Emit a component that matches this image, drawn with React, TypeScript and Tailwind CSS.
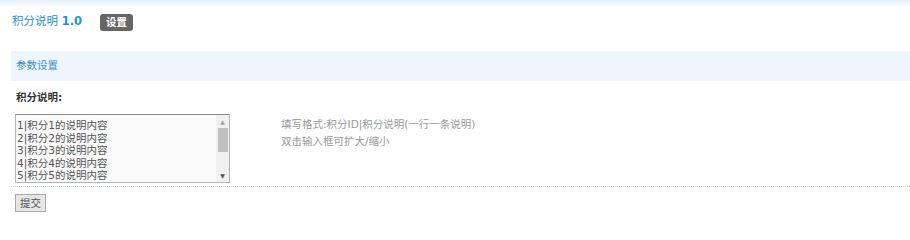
const CN = "font-['DejaVu_Sans','Noto_Sans_CJK_SC',sans-serif]";

const LINES = [1, 2, 3, 4, 5, 6, 7, 8].map((n) => `${n}|积分${n}的说明内容`).join("\n");

export default function App() {
  return (
    <div className={`min-h-[231px] bg-white text-[10.5px] text-[#333] ${CN}`}>
      <div className="h-[7px] bg-gradient-to-b from-[#e3eef9] to-white" />

      <div className="flex items-center h-[30px] px-[12px]">
        <h1 className="text-[11.5px] leading-none text-[#2b90c8]">
          积分说明 <b className="font-bold">1.0</b>
        </h1>
        <span className="ml-[18px] mt-[1px] h-[17px] px-[6px] flex items-center rounded-[3px] bg-[#666] text-white font-bold text-[10.5px] leading-none">
          设置
        </span>
      </div>

      <div className="ml-[11px] mt-[14px]">
        <div className="h-[30px] flex items-center px-[5px] bg-[#eef5fc] text-[#3a8fc8]">参数设置</div>

        <div className="px-[5px] pt-[9px] font-bold leading-[14px]">积分说明:</div>

        <div className="flex items-start px-[4px] pt-[10px] pb-[3px] border-b border-dotted border-[#bcd3e6]">
          <div className="flex w-[215px] h-[69px] border border-[#b5b5b5] border-t-[#8a8a8a] bg-[#fafafa]">
            <textarea
              readOnly
              defaultValue={LINES}
              className="flex-1 h-full resize-none overflow-hidden bg-transparent px-[1px] pt-[4px] text-[10.5px] leading-[12.5px] text-[#555] outline-none"
            />
            <div className="w-[13px] flex flex-col items-center bg-[#f1f1f1]">
              <span className="h-[13px] flex items-center text-[6px] text-[#a3a3a3] leading-none">▲</span>
              <span className="w-[10px] h-[24px] bg-[#c1c1c1]" />
              <span className="mt-auto h-[13px] flex items-center text-[6px] text-[#505050] leading-none">▼</span>
            </div>
          </div>
          <div className="ml-[51px] mt-[2px] text-[#999] leading-[17px]">
            <p>填写格式:积分ID|积分说明(一行一条说明)</p>
            <p>双击输入框可扩大/缩小</p>
          </div>
        </div>

        <div className="px-[4px] pt-[7px]">
          <button className="h-[18px] px-[4px] border border-[#aaa] bg-[#e6e6e6] text-[#555] text-[10.5px] leading-none">
            提交
          </button>
        </div>
      </div>
    </div>
  );
}
